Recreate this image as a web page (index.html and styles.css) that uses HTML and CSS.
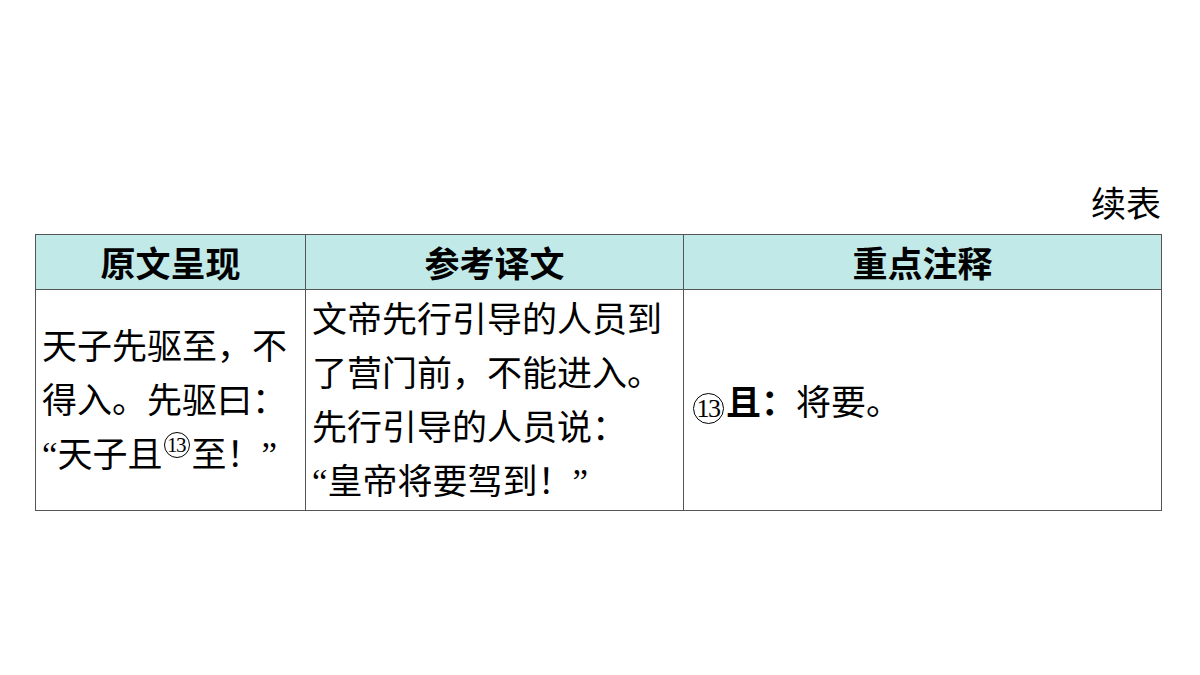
FILE: index.html
```html
<!DOCTYPE html>
<html lang="zh">
<head>
<meta charset="utf-8">
<link rel="stylesheet" href="styles.css">
</head>
<body>
<div class="page">
  <div class="caption">续表</div>
  <table class="tbl">
    <colgroup>
      <col class="c1"><col class="c2"><col class="c3">
    </colgroup>
    <thead>
      <tr><th>原文呈现</th><th>参考译文</th><th>重点注释</th></tr>
    </thead>
    <tbody>
      <tr>
        <td class="orig">天子先驱至，不<br>得入。先驱曰：<br><span class="q">“</span>天子且<span class="circ small">13</span>至！<span class="q">”</span></td>
        <td class="trans">文帝先行引导的人员到<br>了营门前，不能进入。<br>先行引导的人员说：<br><span class="q">“</span>皇帝将要驾到！<span class="q">”</span></td>
        <td class="notes"><span class="circ big">13</span><b>且：</b><span class="def">将要。</span></td>
      </tr>
    </tbody>
  </table>
</div>
</body>
</html>
```
FILE: styles.css
```css
html, body {
  margin: 0;
  padding: 0;
  background: #fff;
}
.page {
  width: 1200px;
  height: 675px;
  padding: 176px 0 0 35px;
  box-sizing: border-box;
  font-family: "Noto Sans CJK SC", "Noto Sans", sans-serif;
  color: #000;
}
.caption {
  width: 1126px;
  text-align: right;
  font-size: 35px;
  line-height: 52px;
  height: 58px;
}
.tbl {
  border-collapse: collapse;
  width: 1126px;
  table-layout: fixed;
}
.c1 { width: 270px; }
.c2 { width: 378px; }
.c3 { width: 478px; }
.tbl th, .tbl td {
  border: 1px solid #555;
  padding: 0 6px;
}
.tbl th {
  background: #c0e9e7;
  height: 54px;
  font-size: 35px;
  font-weight: 700;
  line-height: 54px;
  text-align: center;
}
.tbl td {
  height: 219px;
  font-size: 35px;
  line-height: 54px;
  vertical-align: middle;
  white-space: nowrap;
}
.orig { padding-top: 4px; }
.trans { padding-top: 3px; padding-left: 7px; }
.q {
  font-family: "Liberation Serif", serif;
}
.circ {
  display: inline-block;
  box-sizing: border-box;
  border: 1.3px solid #000;
  border-radius: 50%;
  text-align: center;
  font-family: "Liberation Serif", serif;
  letter-spacing: -1.5px;
  text-indent: -1px;
}
.circ.small {
  width: 26px;
  height: 26px;
  font-size: 21px;
  line-height: 24px;
  vertical-align: 15px;
  margin: 0 2px 0 1px;
}
.circ.big {
  width: 31px;
  height: 31px;
  font-size: 26px;
  line-height: 29px;
  vertical-align: -2px;
  margin: 0 2px 0 3px;
}
.notes { padding-left: 6px; padding-top: 4px; }
.notes b { font-weight: 700; }
.def { font-weight: 400; }
```
